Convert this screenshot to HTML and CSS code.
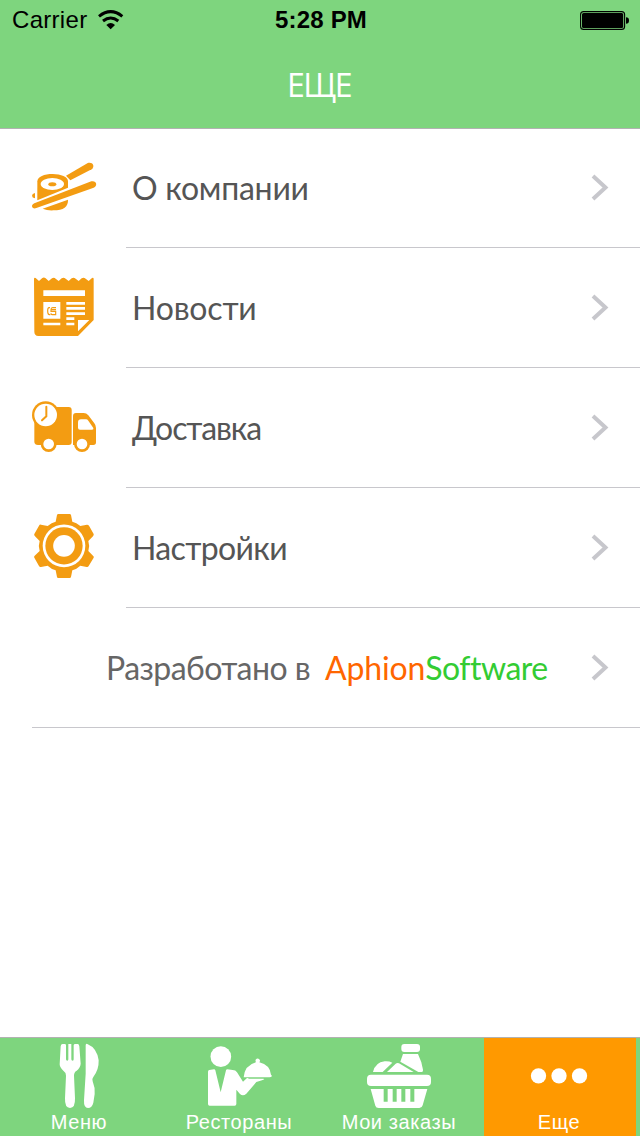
FILE: index.html
```html
<!DOCTYPE html>
<html lang="ru">
<head>
<meta charset="utf-8">
<title>Еще</title>
<link rel="stylesheet" href="styles.css">
</head>
<body>
<div class="screen">
  <header class="header">
    <div class="status">
      <div class="status-left">
        <span class="carrier">Carrier</span>
        <svg class="wifi" viewBox="294 30 78 60">
          <path d="M297 49Q332 21 367 49" fill="none" stroke="#000" stroke-width="9"/>
          <path d="M309 63Q332 45 355 63" fill="none" stroke="#000" stroke-width="9"/>
          <path d="M319 75Q332 63 345 75L332 88Z"/>
        </svg>
      </div>
      <span class="clock">5:28 PM</span>
      <svg class="battery" viewBox="0 0 50 20">
        <rect x=".6" y=".6" width="44" height="17.8" rx="3" fill="none" stroke="#000" stroke-width="1.1"/>
        <rect x="2" y="2" width="41.2" height="15" rx="1.6"/>
        <path d="M46 6.3Q49 6.3 49 9.5T46 12.7Z"/>
      </svg>
    </div>
    <h1 class="title">ЕЩЕ</h1>
  </header>

  <main class="list">
    <div class="row">
      <svg class="icon" viewBox="36 18 192 192">
        <path d="M52 151V94C52 80 73 72 98 72S144 81 144 94V113Z"/>
        <ellipse class="hole" cx="97" cy="102" rx="35" ry="18"/>
        <ellipse cx="97" cy="102.500" rx="12" ry="6"/>
        <path d="M138 77L202 40C216 34 227 48 215 58L151 91Z"/>
        <path d="M43 160L214 94C229 90 234 107 221 113L47 175C36 178 31 165 43 160Z"/>
        <path d="M68 176L144 149C145 170 131 181 100 181Q82 182 68 176Z"/>
        <path d="M45 129V145Q36 143 36 137Q36 131 45 129Z"/>
      </svg>
      <div class="cell"><span class="label about">О компании</span><svg class="chevron" viewBox="0 0 18 28"><path d="M2 2L14.500 13.500 2 25"/></svg></div>
    </div>
    <div class="row">
      <svg class="icon" viewBox="36 33 192 192">
        <path d="M42 41Q43 37 47 39L57 48L67 39Q72 36 77 40L86 48L96 40Q102 36 107 41L116 48L125 40Q131 36 137 41L146 48L155 40Q161 36 167 41L176 48L185 40Q191 36 197 41L206 48L216 39Q221 37 221 42V165L174 213H55Q43 212 43 200Z"/>
        <g class="hole"><path d="M70 76H195V93H70ZM70 111H121V161H70ZM70 173H121V181H70ZM139 111H195V119H139ZM139 126H195V134H139ZM139 142H195V150H139ZM139 157H163V165H139ZM139 173H163V181H139ZM174 165H208L174 199Z"/></g>
        <path d="M90 128H87Q83 128 83 138Q83 149 88 149H91M108 128H98Q93 128 93 134V139H107V149H96Q93 149 93 145M93 134H108" fill="none" stroke="#f39c12" stroke-width="3.500"/>
      </svg>
      <div class="cell"><span class="label news">Новости</span><svg class="chevron" viewBox="0 0 18 28"><path d="M2 2L14.500 13.500 2 25"/></svg></div>
    </div>
    <div class="row">
      <svg class="icon" viewBox="36 18 192 192">
        <path d="M43 75V156Q44 165 54 165H146Q155 165 155 156V60Q155 51 146 51H90Z"/>
        <path d="M159 165V78Q159 69 168 69H191Q199 69 205 76L223 100Q228 106 228 114V157Q228 165 220 165Z"/>
        <path class="hole" d="M183 88H198Q202 88 205 92L220 114Q222 119 216 119H180Q174 119 174 113V97Q174 88 183 88Z"/>
        <circle cx="77" cy="75" r="41"/><circle class="hole" cx="77" cy="75" r="34"/>
        <path d="M79 50V79L66 91" fill="none" stroke="#f39c12" stroke-width="6" stroke-linecap="round"/>
        <circle cx="86" cy="162" r="24"/><circle class="hole" cx="86" cy="162" r="16"/>
        <circle cx="186" cy="162" r="24"/><circle class="hole" cx="186" cy="162" r="16"/>
      </svg>
      <div class="cell"><span class="label delivery">Доставка</span><svg class="chevron" viewBox="0 0 18 28"><path d="M2 2L14.500 13.500 2 25"/></svg></div>
    </div>
    <div class="row">
      <svg class="icon" viewBox="36 33 192 192">
        <path d="M115 27H149Q152 27 153 30L157 50Q169 53 181 63L201 59Q205 59 207 62L221 87Q222 90 219 94L205 108Q210 123 205 138L219 152Q223 155 221 158L206 183Q204 187 200 186L181 182Q169 193 157 196L153 216Q152 219 149 219H115Q111 219 111 216L107 196Q95 193 83 182L63 186Q59 187 57 183L43 158Q41 155 44 152L59 138Q54 123 59 108L45 94Q41 90 43 87L57 62Q59 58 63 59L83 63Q95 53 107 50L111 30Q112 27 115 27Z"/>
        <circle class="hole" cx="132" cy="122.500" r="64"/><circle cx="132" cy="122.500" r="56"/><circle class="hole" cx="132" cy="122.500" r="32.500"/>
      </svg>
      <div class="cell"><span class="label settings">Настройки</span><svg class="chevron" viewBox="0 0 18 28"><path d="M2 2L14.500 13.500 2 25"/></svg></div>
    </div>
    <div class="row credit">
      <div class="cell"><span class="made">Разработано в</span><span class="brand-a">Aphion</span><span class="brand-b">Software</span><svg class="chevron" viewBox="0 0 18 28"><path d="M2 2L14.500 13.500 2 25"/></svg></div>
    </div>
  </main>

  <nav class="tabs">
    <div class="tab">
      <svg class="tab-icon" viewBox="141 42 192 192">
        <path d="M188 42H194Q198 42 198 46V88Q198 92 202 92Q205 92 205 88V42H214V88Q214 92 218 92Q221 92 221 88V46Q221 42 226 42H233Q237 42 238 49L242 101Q241 113 230 122Q222 126 222 137L225 205Q226 234 210 234Q194 234 195 205L198 137Q198 127 190 122Q179 112 179 103L182 49Q183 42 188 42Z"/>
        <path d="M257 46Q257 40 262 42Q291 54 296 91Q297 119 280 141Q275 147 278 154Q286 174 284 192L280 218Q276 234 264 234Q251 234 252 211L257 131Z"/>
      </svg>
      <span class="tab-label t1">Меню</span>
    </div>
    <div class="tab">
      <svg class="tab-icon" viewBox="141 42 192 192">
        <circle cx="182.500" cy="80" r="31"/>
        <path d="M148 120L162 118Q165 118 166 121L182 187L198 121Q199 118 202 118L218 120Q227 120 231 127L249 155L261 144Q263 143 267 146H310Q318 147 306 151L289 156L259 191Q249 200 240 192L229 179V222Q229 227 224 227H149Q144 227 144 222V125Q144 121 148 120Z"/>
        <path d="M251 142Q254 106 288 97Q284 89 290 86Q297 84 300 91Q300 95 298 97Q330 105 333 134L336 138Q334 142 328 142Z"/>
      </svg>
      <span class="tab-label t2">Рестораны</span>
    </div>
    <div class="tab">
      <svg class="tab-icon" viewBox="141 42 192 192">
        <rect x="244" y="42" width="56" height="24" rx="9"/>
        <path d="M249 72H294Q305 94 309 119Q310 126 305 126H295L241 95Z"/>
        <path d="M159 126Q166 97 194 94Q207 93 217 98L188 126ZM201 126L227 101Q232 97 237 100L281 126Z"/>
        <rect x="141" y="134" width="192" height="34" rx="12"/>
        <path fill-rule="evenodd" d="M152 177H322L308 226Q306 234 298 234H176Q168 234 166 227ZM191 177V215H203V177ZM218 177V215H230V177ZM244 177V215H256V177ZM271 177V215H283V177Z"/>
      </svg>
      <span class="tab-label t3">Мои заказы</span>
    </div>
    <div class="tab active">
      <svg class="tab-icon" viewBox="621 42 192 192"><circle cx="655.500" cy="137.500" r="23"/><circle cx="717" cy="137.500" r="23"/><circle cx="778.500" cy="137.500" r="23"/></svg>
      <span class="tab-label t4">Еще</span>
    </div>
  </nav>
</div>
</body>
</html>
```
FILE: styles.css
```css
* { box-sizing: border-box; }
body { margin: 0; background: #fff; }
.screen { width: 640px; height: 1136px; display: flex; flex-direction: column; overflow: hidden; font-family: Lato, "Open Sans", sans-serif; }
.header { height: 129px; flex: none; background: #7ed57e; border-bottom: 1px solid #b2b2b2; }
.status { height: 40px; display: grid; grid-template-columns: 1fr auto 1fr; align-items: center; padding: 0 10px 0 12px; font: 24px/40px "Liberation Sans", Arial, sans-serif; color: #000; }
.status-left { display: flex; align-items: center; gap: 11px; }
.carrier { letter-spacing: .3px; }
.wifi { width: 26px; height: 20px; }
.clock { font-weight: 700; letter-spacing: .2px; }
.battery { width: 50px; height: 20px; justify-self: end; margin-top: 2px; }
.title { margin: 0; height: 88px; text-align: center; color: #fff; font: 400 32px/90px "Open Sans", sans-serif; letter-spacing: -1.5px; padding-right: 2px; }
.list { flex: 1; margin-top: -1px; }
.row { height: 120px; display: flex; padding-left: 32px; }
.icon { width: 64px; height: 64px; margin: 28px 30px 0 0; flex: none; overflow: visible; fill: #f39c12; }
.hole { fill: #fff; }
.cell { flex: 1; display: flex; align-items: center; border-bottom: 1px solid #c8c7cc; padding: 0 31px 0 6px; font-size: 32px; line-height: 40px; color: #555; white-space: nowrap; }
.about { letter-spacing: -.25px; }
.news { letter-spacing: -.2px; }
.delivery { letter-spacing: -1.1px; }
.settings { letter-spacing: -.65px; }
.chevron { width: 18px; height: 28px; margin-left: auto; fill: none; stroke: #c7c7cc; stroke-width: 4; }
.credit .cell { padding-left: 74px; }
.made { color: #666; margin-right: 15px; letter-spacing: -.55px; }
.brand-a { color: #ff6600; letter-spacing: -.15px; }
.brand-b { color: #33cc33; letter-spacing: -.5px; }
.tabs { height: 99px; flex: none; display: grid; grid-template-columns: repeat(4, 152px); gap: 8px; padding: 0 4px; background: #7ed57e; border-top: 1px solid #b2b2b2; }
.tab { display: flex; flex-direction: column; align-items: center; padding: 6px 2px 0 0; color: #fff; }
.active { background: #ff9900; }
.tab-icon { width: 64px; height: 64px; flex: none; overflow: visible; fill: #fff; }
.tab-label { font: 20px/24px "Liberation Sans", Arial, sans-serif; margin-top: 2px; white-space: nowrap; letter-spacing: .6px; }
```
